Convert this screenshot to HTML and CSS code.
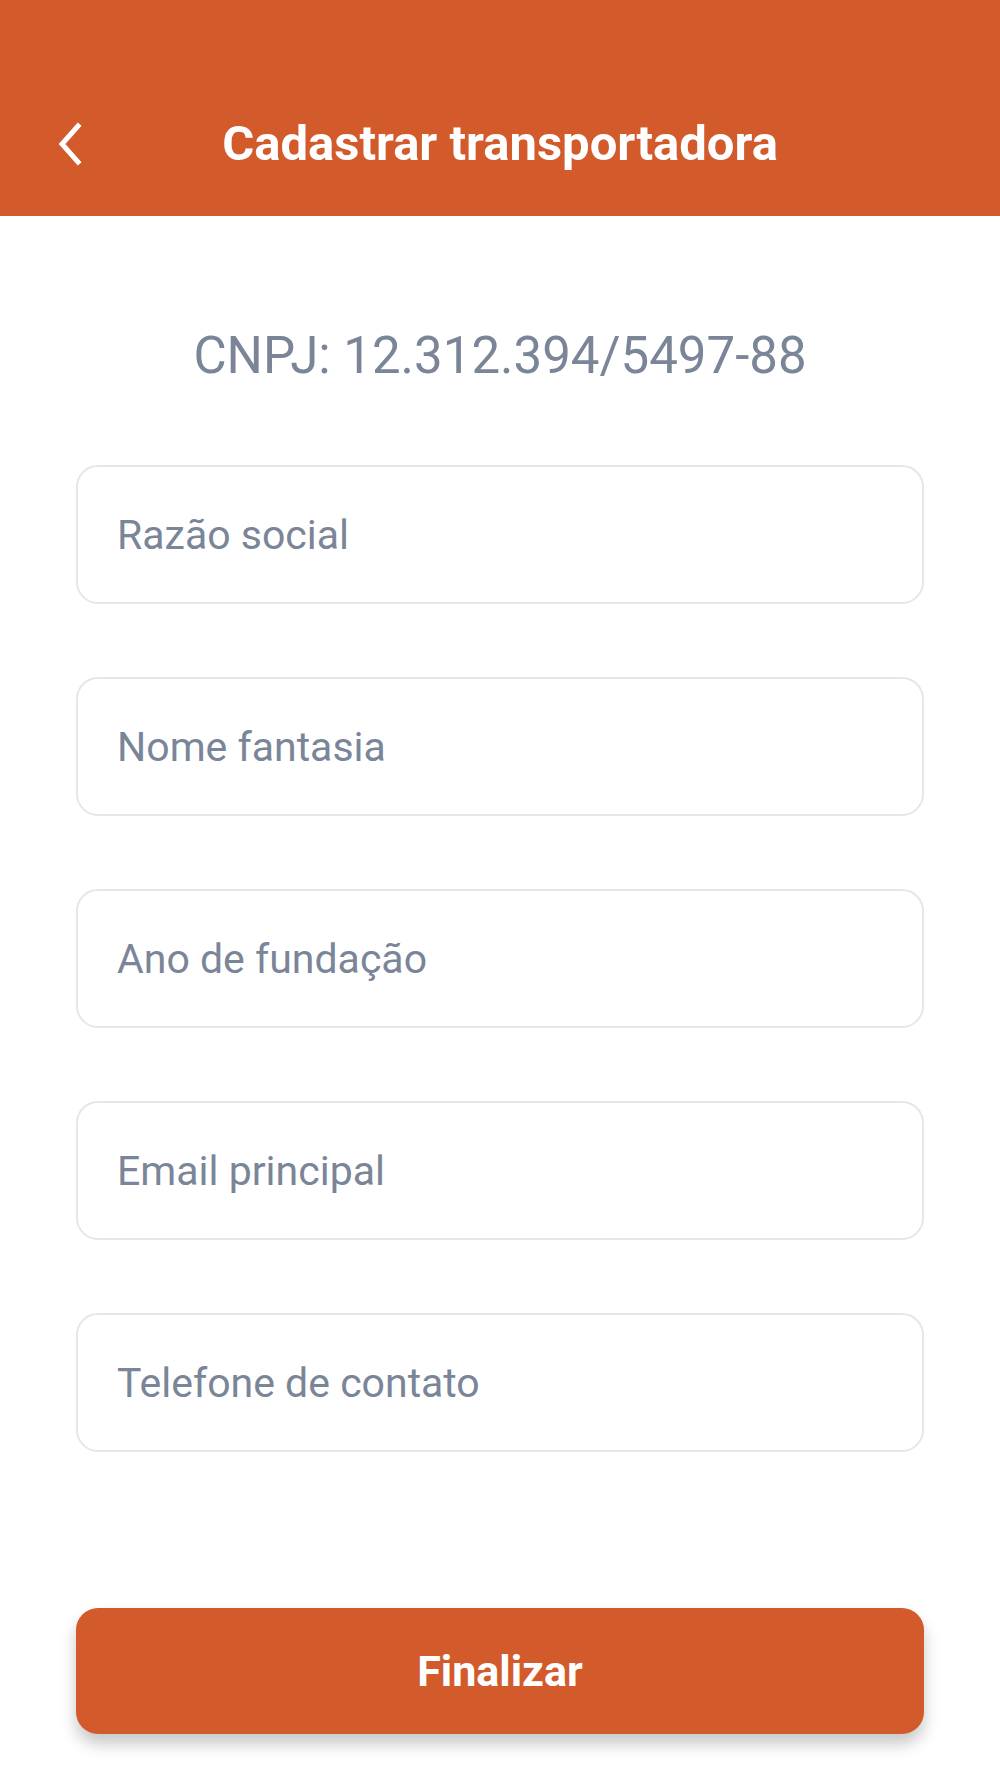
FILE: index.html
```html
<!DOCTYPE html>
<html lang="pt-BR">
<head>
<meta charset="utf-8">
<title>Cadastrar transportadora</title>
<link rel="stylesheet" href="styles.css">
</head>
<body>
<div class="app">
  <header class="header">
    <div class="bar">
      <button class="back" aria-label="Voltar">
        <svg width="28" height="44" viewBox="0 0 28 44"><path d="M22 4 L6 22 L22 40" fill="none" stroke="#fff" stroke-width="5" stroke-linecap="square" stroke-linejoin="miter"/></svg>
      </button>
      <h1 class="title">Cadastrar transportadora</h1>
    </div>
  </header>
  <main class="content">
    <p class="cnpj">CNPJ: 12.312.394/5497-88</p>
    <form class="form">
      <input class="field" type="text" placeholder="Razão social">
      <input class="field" type="text" placeholder="Nome fantasia">
      <input class="field" type="text" placeholder="Ano de fundação">
      <input class="field" type="text" placeholder="Email principal">
      <input class="field" type="text" placeholder="Telefone de contato">
    </form>
    <button class="submit" type="button">Finalizar</button>
  </main>
</div>
</body>
</html>
```
FILE: styles.css
```css
* { box-sizing: border-box; }
html, body { margin: 0; padding: 0; background: #fff; }
body { font-family: Roboto, "Noto Sans", Arial, sans-serif; }
.app { width: 1000px; min-height: 1778px; display: flex; flex-direction: column; }
.header { background: #d25a2b; padding-top: 72px; height: 216px; }
.bar { position: relative; height: 144px; display: flex; align-items: center; justify-content: center; }
.back { position: absolute; left: 56px; top: 50px; width: 28px; height: 44px; padding: 0; border: 0; background: none; display: flex; }
.title { margin: 0; color: #fff; font-size: 49px; line-height: 60px; font-weight: 700; letter-spacing: 0; }
.content { padding: 0 76px; display: flex; flex-direction: column; }
.cnpj { margin: 0; margin-top: 110px; text-align: center; color: #7a8598; font-size: 51px; line-height: 60px; }
.form { margin-top: 79px; display: flex; flex-direction: column; gap: 73px; }
.field { display: block; width: 848px; height: 139px; border: 2px solid #e6e6e6; border-radius: 22px; padding: 0 0 0 39px; font-family: inherit; font-size: 41px; color: #333; background: #fff; outline: none; }
.field::placeholder { color: #7a8598; }
.submit { margin-top: 156px; width: 848px; height: 126px; border: 0; border-radius: 22px; background: #d25a2b; color: #fff; font-family: inherit; font-size: 43px; font-weight: 700; box-shadow: 0 10px 16px rgba(0,0,0,0.22); }
```
